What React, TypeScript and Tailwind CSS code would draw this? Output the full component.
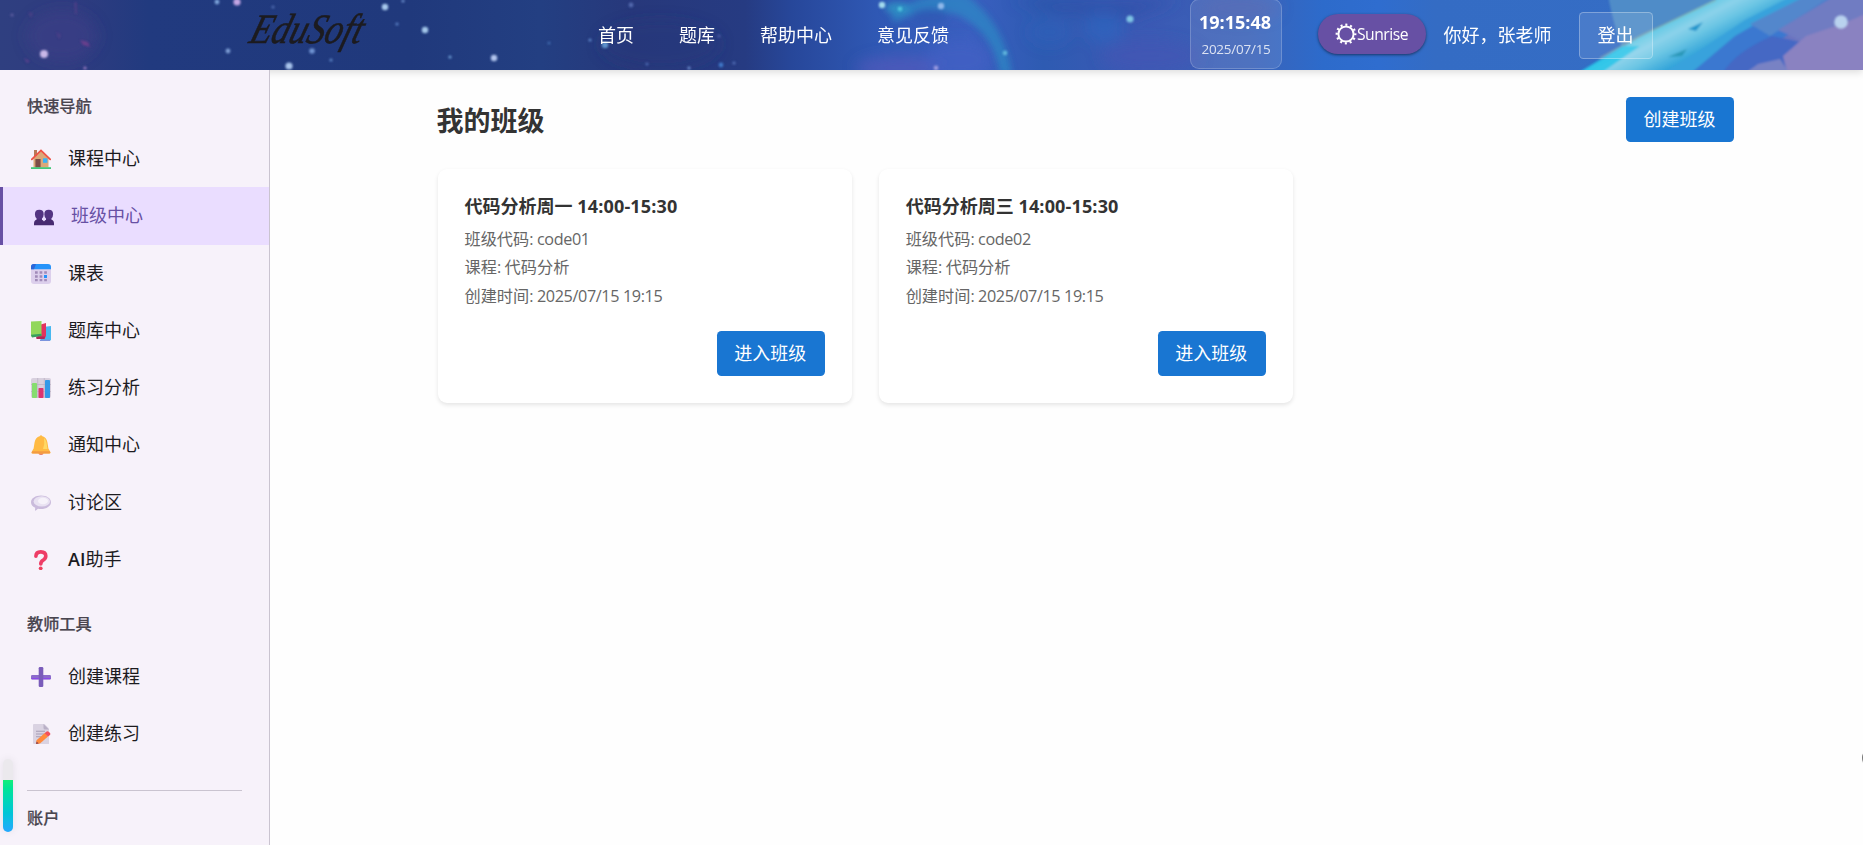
import type { ReactNode } from "react";

const FONT =
  "font-['Open_Sans','Noto_Sans_CJK_SC',sans-serif]";

const stars: [number, number, number, string][] = [
  [44, 54, 5, "#c9b8e8"], [12, 15, 2, "#5f5fa0"], [85, 68, 2, "#9a7cc0"], [217, 2, 3, "#7fa6dc"],
  [237, 2, 4.5, "#c3a6e4"], [228, 51, 3, "#7f9fd6"], [273, 7, 2, "#4f6cb0"], [289, 66, 4.5, "#a9c4ec"],
  [312, 51, 3.5, "#6f93d2"], [331, 60, 2, "#5f86c8"], [385, 7, 4, "#a9cbee"], [397, 24, 2, "#5a7fc4"],
  [403, 1, 2, "#6a8ccc"], [425, 30, 4, "#a4c8ea"], [450, 57, 2, "#6d9ed6"], [494, 58, 4, "#b3c6ee"],
  [631, 5, 3, "#5269ae"], [605, 45, 4, "#5f93cc"], [590, 40, 2, "#5f86c8"], [549, 43, 2, "#3f68ac"],
  [647, 64, 2, "#4c67b0"], [689, 68, 2, "#6f93d2"], [721, 65, 3, "#3f78c8"], [734, 63, 2, "#5370b8"],
  [719, 36, 2, "#4a5fa8"], [882, 5, 4, "#a4dcee"], [900, 9, 3, "#4fc0dc"], [941, 6, 4, "#8fb8ea"],
  [936, 68, 3, "#9a9ae0"], [1130, 19, 4.5, "#7fc4e4"], [1005, 53, 3, "#5fb4dc"], [1841, 22, 8.5, "#b9d2ee"],
];

function HeaderBackdrop() {
  return (
    <svg
      className="absolute inset-0 h-full w-full"
      viewBox="0 0 1863 70"
      preserveAspectRatio="none"
      aria-hidden="true"
    >
      <defs>
        <linearGradient id="sky" x1="0" x2="1863" y1="0" y2="0" gradientUnits="userSpaceOnUse">
          <stop offset="0" stopColor="#2f3f80" />
          <stop offset="0.04" stopColor="#2f3c80" />
          <stop offset="0.08" stopColor="#213a7f" />
          <stop offset="0.22" stopColor="#20397c" />
          <stop offset="0.29" stopColor="#233f82" />
          <stop offset="0.34" stopColor="#27387b" />
          <stop offset="0.4" stopColor="#263b82" />
          <stop offset="0.425" stopColor="#27479a" />
          <stop offset="0.47" stopColor="#2f58b4" />
          <stop offset="0.52" stopColor="#3a5fc0" />
          <stop offset="0.56" stopColor="#2e5bb2" />
          <stop offset="0.61" stopColor="#3b59b4" />
          <stop offset="0.67" stopColor="#3a62b8" />
          <stop offset="0.71" stopColor="#2d6bcb" />
          <stop offset="0.74" stopColor="#2f6dcf" />
          <stop offset="0.77" stopColor="#346cc4" />
          <stop offset="0.9" stopColor="#356dc5" />
          <stop offset="0.96" stopColor="#6a74c0" />
          <stop offset="1" stopColor="#8f83c0" />
        </linearGradient>
        <linearGradient id="streak" x1="1650" y1="24" x2="1672" y2="66" gradientUnits="userSpaceOnUse">
          <stop offset="0" stopColor="#4cc4e2" />
          <stop offset="0.4" stopColor="#8bd2ea" />
          <stop offset="0.65" stopColor="#6cc6e4" />
          <stop offset="1" stopColor="#36a6da" />
        </linearGradient>
        <filter id="soft" x="-30%" y="-60%" width="160%" height="220%">
          <feGaussianBlur stdDeviation="7" />
        </filter>
        <filter id="arc" x="-30%" y="-60%" width="160%" height="220%">
          <feGaussianBlur stdDeviation="3" />
        </filter>
        <filter id="slight" x="-30%" y="-30%" width="160%" height="160%">
          <feGaussianBlur stdDeviation="1" />
        </filter>
      </defs>
      <rect width="1863" height="70" fill="url(#sky)" />
      <g filter="url(#soft)">
        <ellipse cx="62" cy="36" rx="36" ry="26" fill="#47408a" opacity="0.4" />
        <ellipse cx="660" cy="44" rx="60" ry="24" fill="#2b357a" opacity="0.4" />
        <ellipse cx="900" cy="68" rx="44" ry="12" fill="#5558ba" opacity="0.7" />
        <ellipse cx="960" cy="60" rx="34" ry="20" fill="#4460c4" opacity="0.7" />
        <path d="M1010 0L1180 0L1130 18L1060 14Z" fill="#2b4fa6" opacity="0.6" />
        <ellipse cx="1050" cy="32" rx="22" ry="14" fill="#2a62c0" opacity="0.3" />
        <ellipse cx="1104" cy="28" rx="20" ry="16" fill="#2a68c4" opacity="0.5" />
        <ellipse cx="1150" cy="56" rx="50" ry="16" fill="#4256b4" opacity="0.6" />
        <ellipse cx="1240" cy="8" rx="40" ry="12" fill="#4a5cae" opacity="0.6" />
      </g>
      <g filter="url(#arc)">
        <path d="M890 18Q905 -2 945 -6H965Q1004 22 1012 74H1000Q994 34 960 16Q930 4 896 22Z" fill="#2d8fc6" opacity="0.65" />
        <ellipse cx="897" cy="8" rx="12" ry="6" fill="#2fa0c8" opacity="0.7" />
        <ellipse cx="930" cy="16" rx="18" ry="8" fill="#3058b4" opacity="0.7" />
      </g>
      <g filter="url(#slight)">
        <path d="M80 40l8 2 2 5-7-2z" fill="#8a3f92" opacity="0.6" />
        <path d="M24 58l6 3-3 2z" fill="#6e4292" opacity="0.7" />
        <path d="M56 32l5 3-2 4zM28 12l5 1-2 5zM74 2l3 0 0 12-2 0z" fill="#5f3f8c" opacity="0.5" />
        <path d="M1608 -4H1722L1622 48Q1614 26 1608 -4Z" fill="#508cc8" />
        <path d="M1578 74L1638 38L1722 -4L1798 -4L1668 74Z" fill="url(#streak)" />
        <path d="M1600 58L1640 36L1716 0" stroke="#8fae9c" strokeWidth="1.2" fill="none" opacity="0.8" />
        <path d="M1576 74L1622 46L1640 46L1600 74Z" fill="#22c4e8" opacity="0.8" />
        <path d="M1662 74L1798 -4H1850L1725 74Z" fill="#3a78d0" />
        <path d="M1662 74L1700 50L1745 20L1792 -4L1806 -4L1770 16L1735 36L1690 74Z" fill="#38a2dc" />
        <path d="M1750 24L1806 -4H1832L1770 36Z" fill="#5387cc" />
        <path d="M1688 29L1703 22L1696 31Z" fill="#2496cc" />
        <path d="M1668 57L1687 49L1682 56Z" fill="#2b98b8" />
        <path d="M1722 74Q1735 52 1772 36L1800 42L1790 74Z" fill="#4468c4" />
        <path d="M1778 30L1834 -4H1870V24L1800 40Z" fill="#6f7cc2" />
        <path d="M1783 56L1806 36L1842 24L1870 12V76H1788Z" fill="#8a82c1" />
        <path d="M1744 74L1758 64L1780 59L1790 74Z" fill="#7882c4" />
      </g>
      <g filter="url(#slight)">
        {stars.map(([x, y, r, color]) => (
          <circle key={`${x}-${y}`} cx={x} cy={y} r={r * 0.8} fill={color} />
        ))}
      </g>
    </svg>
  );
}

function Logo() {
  return (
    <svg className="h-[70px] w-[150px] shrink-0 overflow-visible" viewBox="0 0 150 70" role="img" aria-label="EduSoft">
      <text
        x="2"
        y="43.5"
        textLength="112"
        lengthAdjust="spacingAndGlyphs"
        transform="translate(13 0) skewX(-17)"
        strokeWidth="0.6"
        className="fill-[#1c1b1f] stroke-[#1c1b1f] font-['Liberation_Serif',serif] text-[42px] italic"
      >
        EduSoft
      </text>
    </svg>
  );
}

function SunIcon() {
  return (
    <svg className="h-[22px] w-[22px]" viewBox="0 0 22 22" fill="none" stroke="white">
      <circle cx="11" cy="11" r="7.6" strokeWidth="2" />
      <circle cx="11" cy="11" r="9.3" strokeWidth="2.2" strokeDasharray="2.1 2.77" strokeDashoffset="1" />
    </svg>
  );
}

function Icon({ children }: { children: ReactNode }) {
  return (
    <svg className="mt-px h-5 w-5 shrink-0" viewBox="0 0 20 20" fill="none">
      {children}
    </svg>
  );
}

const icons: Record<string, ReactNode> = {
  home: (
    <Icon>
      <path d="M3 1h3v6H3z" fill="#b87a58" />
      <path d="M2.5 9.5L10 2l7.5 7.5V18.5h-15z" fill="#dba878" />
      <path d="M0.8 10.4L10 1.4l9.2 9" stroke="#ee5144" strokeWidth="1.8" strokeLinecap="round" />
      <path d="M4.4 10h5.2v8.5H4.4z" fill="#7d4e48" />
      <path d="M12 9.3h4.4v4.5H12z" fill="#3cb2f5" />
      <path d="M0 18.2h20V20H0z" fill="#42c978" />
    </Icon>
  ),
  people: (
    <Icon>
      <path d="M5.300 3.800q4.400 0 4.400 4.400 0 2.600-1.700 4.400v2H2.600v-2Q.9 10.800.9 8.200q0-4.400 4.400-4.400z" fill="#533482" />
      <path d="M14.700 3.800q4.400 0 4.400 4.400 0 2.600-1.700 4.400v2H12v-2q-1.700-1.800-1.700-4.400 0-4.400 4.400-4.400z" fill="#533482" />
      <path d="M0 19.200v-1.700q0-3.700 4-3.900h2.600q3 .4 3.400 2 .4-1.600 3.400-2H16q4 .2 4 3.900v1.700z" fill="#472a70" />
    </Icon>
  ),
  calendar: (
    <Icon>
      <rect y="1" width="20" height="19" rx="3" fill="#dccfec" />
      <path d="M0 5.200V3q0-3 3-3h14q3 0 3 3v2.200z" fill="#2693fa" />
      <path d="M0 5.200V3q0-3 3-3h2L3 5.200z" fill="#2c66d8" />
      <g fill="#a08bb8">
        <path d="M4 7.300h2.700v2.500H4zM8.600 7.300h2.700v2.500H8.600zM13.200 7.300h2.700v2.500h-2.700zM4 11.200h2.700v2.500H4zM8.600 11.200h2.700v2.500H8.600zM4 15.100h2.700v2.200H4zM8.600 15.100h2.700v2.200H8.600zM13.200 15.100h2.700v2.200h-2.700z" />
      </g>
      <path d="M13 11h3v3h-3z" fill="#2693fa" />
    </Icon>
  ),
  books: (
    <Icon>
      <path d="M12 6l8-1v14l-1.500 1H9.500z" fill="#48b8f0" />
      <path d="M9 18.500h10V20H9z" fill="#7b94de" />
      <path d="M8 4l7-2v13l-1.500 3H6z" fill="#e2325f" />
      <path d="M5 15.500h9l-.6 2.500H5.500z" fill="#b02858" />
      <path d="M0 .6L10.500 0v14.500L0 15.500z" fill="#92d75a" />
      <path d="M0 13.800l10.500-1V15L1 16.500z" fill="#38a060" />
    </Icon>
  ),
  chart: (
    <Icon>
      <rect width="20" height="20" rx="2" fill="#d8d0de" />
      <path d="M6.700 0v20M13.300 0v20M0 6.500h20M0 13.500h20" stroke="#b9b0c2" strokeWidth=".7" />
      <rect x="1" y="5" width="5" height="15" rx=".8" fill="#86dd70" />
      <rect x="7.500" y="10" width="5" height="10" rx=".8" fill="#dc3470" />
      <rect x="14" y="2" width="5" height="18" rx=".8" fill="#3399e8" />
    </Icon>
  ),
  bell: (
    <Icon>
      <ellipse cx="10" cy="18.600" rx="2.600" ry="1.400" fill="#e9775b" />
      <path d="M8.600 1.300q1.400-2 2.800 0 4 1 5 6l1 6.200 2 3.500q.6 1.500-1 1.500H1.600q-1.600 0-1-1.500l2-3.500 1-6.200q1-5 5-6z" fill="#ffba43" />
      <path d="M13 3q2.500 2 3 8l.5 3H12q2-5 1-11z" fill="#ffd964" />
      <path d="M1.200 16.200h17.600l.4 1.300q0 1-1 1H1.800q-1.400 0-1-1.300z" fill="#f39b42" />
    </Icon>
  ),
  speech: (
    <Icon>
      <path d="M10 2.500c5.500 0 10 2.800 10 6.700S15.500 16 10 16c-1.200 0-2-.1-3-.2L4.800 17.600q-.8.200-.8-.7l.2-2.200C1.500 13.500 0 11.500 0 9.200c0-3.900 4.500-6.700 10-6.700z" fill="#cabbdc" />
      <ellipse cx="10.800" cy="8.400" rx="8.200" ry="5.200" fill="#e9e2f2" />
      <ellipse cx="12" cy="8" rx="5" ry="3.200" fill="#f6f2fa" />
    </Icon>
  ),
  question: (
    <Icon>
      <path d="M4.900 6.300Q5 1.900 9.800 1.900q5 .1 5 4.200 0 2.600-2.600 4-2.400 1.200-2.400 3.900" stroke="#ee3d66" strokeWidth="3.600" strokeLinecap="round" />
      <circle cx="9.700" cy="18.300" r="1.900" fill="#ef3e5c" />
    </Icon>
  ),
  plus: (
    <Icon>
      <rect x="0" y="8" width="20" height="4.400" rx="1.200" fill="#8b6bcb" />
      <rect x="7.700" y="0" width="4.600" height="20" rx="1.200" fill="#7a5cba" />
      <path d="M0.800 11.600h7M12.300 11.600h7" stroke="#8b48e8" strokeWidth="1.200" />
    </Icon>
  ),
  memo: (
    <Icon>
      <path d="M2 1q0-1 1-1h10.500L18 4.500V20H3q-1 0-1-1z" fill="#dad3e2" />
      <path d="M12.500 0L18 5.500h-4q-1.500 0-1.500-1.500z" fill="#b9b0c6" />
      <path d="M5 7.200h9M5 10h8M5 12.800h5" stroke="#a79db5" strokeWidth="1.100" />
      <path d="M5.500 16.200L13.800 9l3.200 3.500L9 19.500l-4 .5z" fill="#ff8a3c" />
      <path d="M13.500 9.200l2.200-1.700q1-.5 2 .3l1.300 1.300q.8 1 0 1.800l-2 1.700z" fill="#f4505a" />
      <path d="M5 20l.6-2.500L7.800 19.600z" fill="#8a4050" />
    </Icon>
  ),
};

type NavEntry = { icon: string; label: ReactNode; active?: boolean };

const quickNav: NavEntry[] = [
  { icon: "home", label: "课程中心" },
  { icon: "people", label: "班级中心", active: true },
  { icon: "calendar", label: "课表" },
  { icon: "books", label: "题库中心" },
  { icon: "chart", label: "练习分析" },
  { icon: "bell", label: "通知中心" },
  { icon: "speech", label: "讨论区" },
  {
    icon: "question",
    label: (
      <>
        <span className="font-semibold">AI</span>助手
      </>
    ),
  },
];

const teacherTools: NavEntry[] = [
  { icon: "plus", label: "创建课程" },
  { icon: "memo", label: "创建练习" },
];

function NavItem({ icon, label, active }: NavEntry) {
  return (
    <li
      className={
        active
          ? "flex h-[57.25px] items-center gap-[17.500px] border-l-[3px] border-[#6750a4] bg-[#eaddff] pl-[30.500px] text-[#6750a4]"
          : "flex h-[57.25px] items-center gap-[17.500px] pl-[30.500px] text-[#1c1b1f]"
      }
    >
      {icons[icon]}
      <span className="text-[18px] leading-[27px]">{label}</span>
    </li>
  );
}

function SectionTitle({ children }: { children: ReactNode }) {
  return (
    <h3 className="px-[27px] text-[16.2px] leading-6 font-medium text-[#49454f] [-webkit-text-stroke:0.2px_#49454f]">
      {children}
    </h3>
  );
}

function PrimaryButton({ children }: { children: ReactNode }) {
  return (
    <button className="flex h-[45px] w-[108px] items-center justify-center rounded-[4.5px] bg-[#1976d2] pr-px text-[18px] text-white">
      {children}
    </button>
  );
}

function ClassCard({ day, code }: { day: string; code: string }) {
  return (
    <article className="h-[234px] rounded-[9px] bg-white px-[27px] pt-[23px] shadow-[0_2px_4px_rgba(0,0,0,0.1)]">
      <h2 className="text-[18px] leading-7 font-bold text-[#333]">
        代码分析{day}
        <span className="tracking-[0.15px]"> 14:00-15:30</span>
      </h2>
      <div className="mt-[4.500px] text-[16.2px] leading-[28.5px] text-[#666]">
        <p>
          班级代码<span className="tracking-[-0.38px]">: {code}</span>
        </p>
        <p>
          课程<span className="tracking-[-0.38px]">: </span>代码分析
        </p>
        <p>
          创建时间<span className="tracking-[-0.38px]">: 2025/07/15 19:15</span>
        </p>
      </div>
      <div className="mt-[21px] flex justify-end">
        <PrimaryButton>进入班级</PrimaryButton>
      </div>
    </article>
  );
}

export default function App() {
  return (
    <div className={`relative flex h-[845px] flex-col overflow-hidden bg-[#fefefe] ${FONT}`}>
      <header className="relative z-10 h-[70px] shrink-0 shadow-[0_2px_8px_rgba(0,0,0,0.15)]">
        <HeaderBackdrop />
        <div className="relative flex h-full items-center pl-[246px] text-[18px] text-white">
          <Logo />
          <nav className="ml-[202px] flex gap-[45px]">
            <a>首页</a>
            <a>题库</a>
            <a>帮助中心</a>
            <a>意见反馈</a>
          </nav>
          <div className="-mt-0.5 ml-[241px] flex h-[70px] w-[92px] flex-col items-center rounded-[9px] border border-white/20 bg-white/10 pt-[9px]">
            <span className="pr-0.5 text-[18px] leading-[27px] font-bold">19:15:48</span>
            <span className="mt-px text-[13.5px] leading-[25px] tracking-[-0.25px] text-white/80">2025/07/15</span>
          </div>
          <button className="-mt-0.5 ml-9 flex h-10 w-[108px] items-center justify-center rounded-full bg-[#6750a4] pr-px shadow-[0_1px_3px_rgba(0,0,0,0.5)]">
            <SunIcon />
            <span className="pt-0.5 text-[15.7px] tracking-[-0.5px]">Sunrise</span>
          </button>
          <span className="ml-[17.500px]">你好，张老师</span>
          <button className="ml-[27.500px] h-[47px] w-[74px] rounded-[4.5px] border border-white/30 bg-white/10 pr-px">
            登出
          </button>
        </div>
      </header>

      <div className="flex min-h-0 flex-1">
        <aside className="z-10 w-[270px] shrink-0 overflow-hidden border-r border-[#cac4d0] bg-[#f7f2fa] pt-6">
          <SectionTitle>快速导航</SectionTitle>
          <ul className="mt-3">
            {quickNav.map((entry) => (
              <NavItem key={entry.icon} {...entry} />
            ))}
          </ul>
          <div className="mt-6">
            <SectionTitle>教师工具</SectionTitle>
          </div>
          <ul className="mt-3">
            {teacherTools.map((entry) => (
              <NavItem key={entry.icon} {...entry} />
            ))}
          </ul>
          <div className="mx-[27px] mt-[27.500px] border-t border-[#cac4d0]" />
          <div className="mt-[15px]">
            <SectionTitle>账户</SectionTitle>
          </div>
        </aside>

        <main className="flex-1 pt-[27px] pr-[129px] pl-[167.500px]">
          <div className="flex h-[45px] items-center justify-between">
            <h1 className="mt-1 -ml-px text-[27px] font-bold text-[#333]">我的班级</h1>
            <PrimaryButton>创建班级</PrimaryButton>
          </div>
          <div className="mt-[27px] grid grid-cols-3 gap-[27px]">
            <ClassCard day="周一" code="code01" />
            <ClassCard day="周三" code="code02" />
          </div>
        </main>
      </div>

      <div className="absolute top-[759px] left-[3px] z-20 flex h-[73px] w-[9.500px] flex-col justify-end overflow-hidden rounded-full bg-[#ebe9ed] shadow-[0_0_8px_rgba(0,0,0,0.08)]">
        <div className="h-[52px] bg-linear-to-t from-[#24a8ff] to-[#12ee78]" />
      </div>
      <div className="absolute top-[748px] -right-[19px] h-5 w-5 rounded-full bg-[#777]" />
    </div>
  );
}
